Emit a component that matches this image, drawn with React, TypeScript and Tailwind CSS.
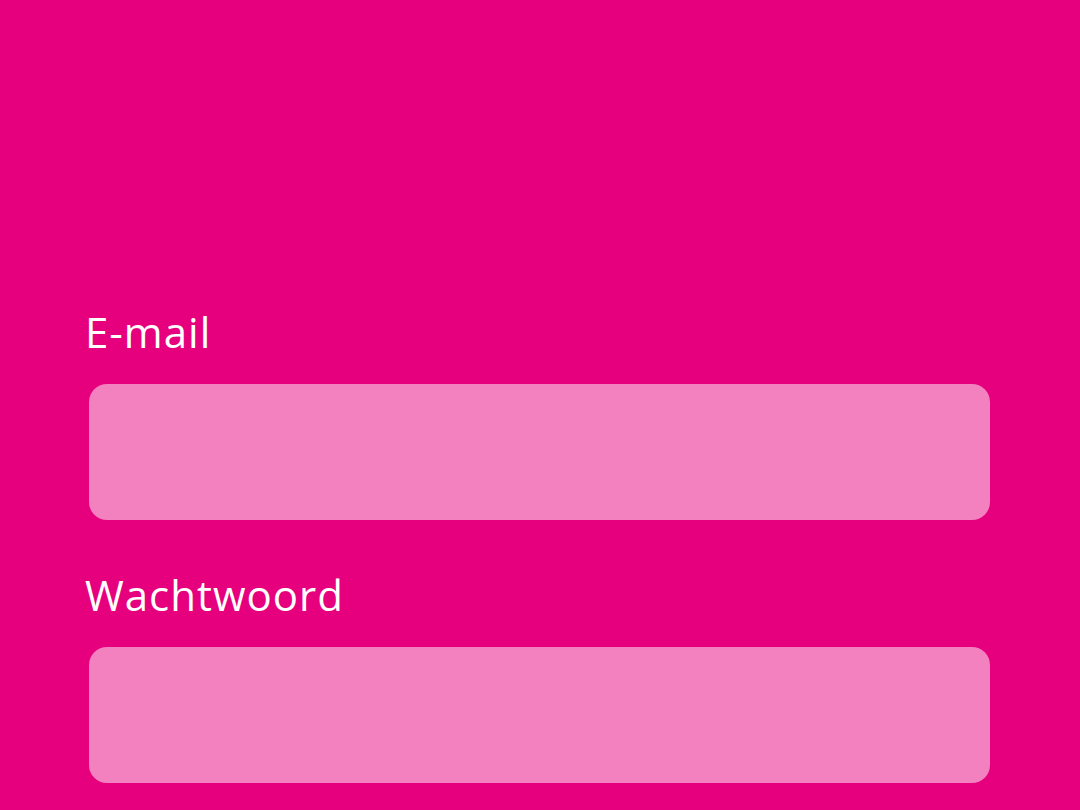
export default function App() {
  return (
    <div className="min-h-[810px] w-full bg-[#E6007E] pt-[311px] font-['Open_Sans',sans-serif] text-white">
      <div className="flex flex-col">
        <label className="pl-[85px] text-[42px] leading-[42px] tracking-[1px]">E-mail</label>
        <div className="ml-[89px] mt-[31px] h-[136px] w-[901px] rounded-[18px] bg-white/50" />
        <label className="mt-[54px] pl-[85px] text-[42px] leading-[42px] tracking-[1px]">Wachtwoord</label>
        <div className="ml-[89px] mt-[31px] h-[136px] w-[901px] rounded-[18px] bg-white/50" />
      </div>
    </div>
  );
}
